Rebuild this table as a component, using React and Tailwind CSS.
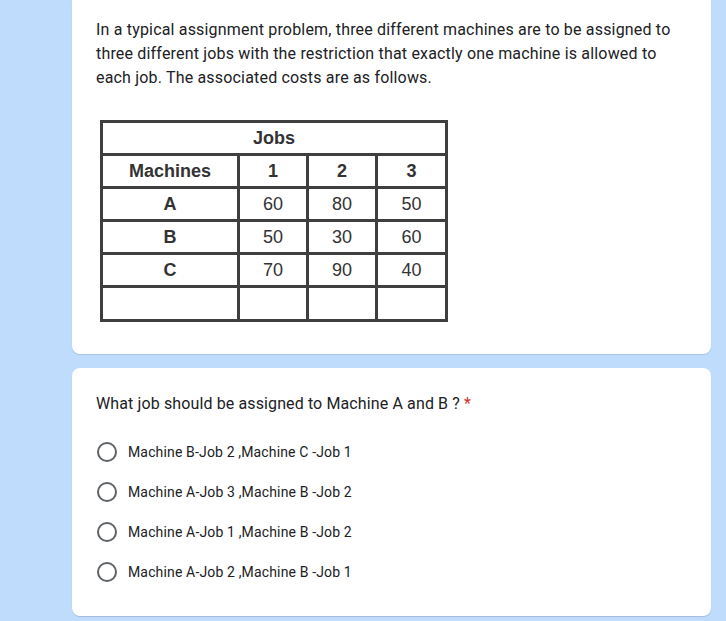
import React from "react";

const rows = [
  ["A", "60", "80", "50"],
  ["B", "50", "30", "60"],
  ["C", "70", "90", "40"],
  ["", "", "", ""],
];

const options = [
  "Machine B-Job 2 ,Machine C -Job 1",
  "Machine A-Job 3 ,Machine B -Job 2",
  "Machine A-Job 1 ,Machine B -Job 2",
  "Machine A-Job 2 ,Machine B -Job 1",
];

function Cell({ children, className = "", ...rest }) {
  return (
    <td
      {...rest}
      className={
        "border-[3px] border-[#3f3f3f] text-center p-0 h-[33px] text-[18px] leading-none text-[#333] " +
        className
      }
    >
      {children}
    </td>
  );
}

export default function App() {
  return (
    <div className="min-h-[621px] w-[726px] bg-[#c0dcfc] pl-[72px] pb-[5px]">
      <div className="w-[639px] bg-white rounded-b-lg px-6 pt-[18px] pb-[32px] shadow-[0_1px_1px_rgba(0,0,0,0.12)]">
        <p className="text-[16px] leading-[24px] tracking-[0.18px] text-[#202124] font-['Roboto',sans-serif] w-[588px]">
          In a typical assignment problem, three different machines are to be assigned to three different jobs with the restriction that exactly one machine is allowed to each job. The associated costs are as follows.
        </p>
        <table className="mt-[30px] ml-[4px] border-collapse font-['Liberation_Sans',Arial,sans-serif]">
          <colgroup>
            <col className="w-[137px]" />
            <col className="w-[69px]" />
            <col className="w-[69px]" />
            <col className="w-[70px]" />
          </colgroup>
          <tbody>
            <tr>
              <Cell className="font-bold" colSpan={4}>
                Jobs
              </Cell>
            </tr>
            <tr>
              <Cell className="font-bold">Machines</Cell>
              <Cell className="font-bold">1</Cell>
              <Cell className="font-bold">2</Cell>
              <Cell className="font-bold">3</Cell>
            </tr>
            {rows.map((r, i) => (
              <tr key={i}>
                <Cell className={"font-bold " + (i === 3 ? "h-[34px]" : "")}>{r[0]}</Cell>
                <Cell>{r[1]}</Cell>
                <Cell>{r[2]}</Cell>
                <Cell>{r[3]}</Cell>
              </tr>
            ))}
          </tbody>
        </table>
      </div>

      <div className="mt-[14px] w-[639px] bg-white rounded-lg px-6 pt-[24px] pb-[24px] shadow-[0_1px_1px_rgba(0,0,0,0.15)] font-['Roboto',sans-serif]">
        <div className="text-[16px] leading-[24px] tracking-[0.12px] text-[#202124]">
          What job should be assigned to Machine A and B ?
          <span className="text-[#d93025] ml-[4px]">*</span>
        </div>
        <div className="mt-[16px] flex flex-col">
          {options.map((o) => (
            <div key={o} className="flex items-center h-[40px]">
              <span className="w-[20px] h-[20px] rounded-full border-2 border-[#5f6368] ml-[1px] shrink-0" />
              <span className="ml-[11px] text-[14px] tracking-[0.15px] text-[#202124]">{o}</span>
            </div>
          ))}
        </div>
      </div>
    </div>
  );
}
